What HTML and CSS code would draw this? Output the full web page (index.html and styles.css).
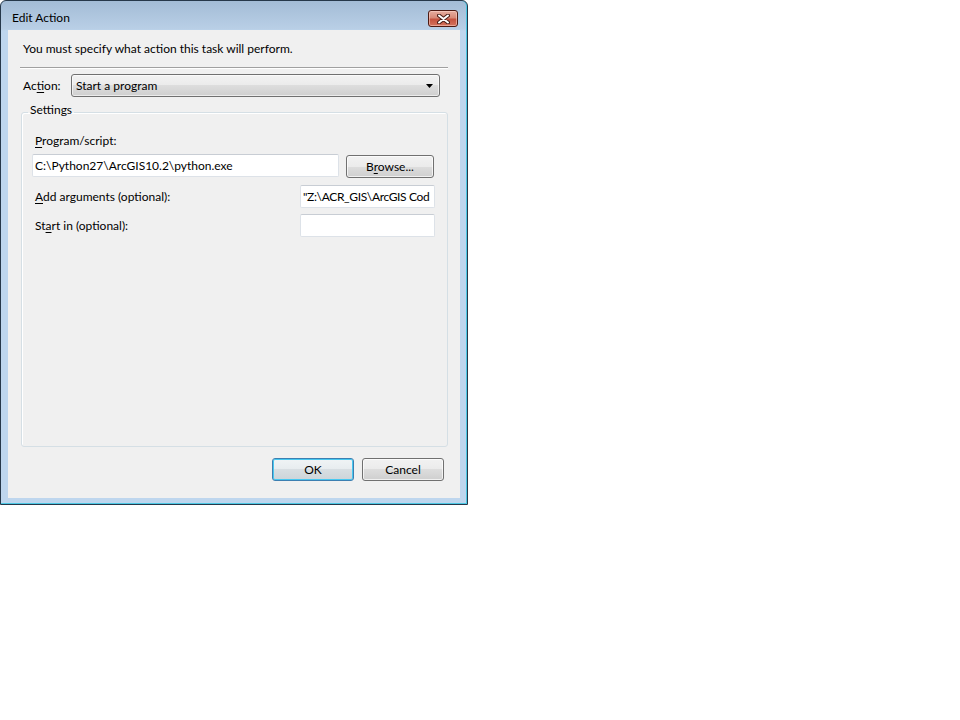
FILE: index.html
```html
<!DOCTYPE html>
<html lang="en">

<head>
    <meta charset="UTF-8">
    <title>Edit Action</title>
    <link rel="stylesheet" href="styles.css">
</head>

<body>
    <div class="window">
        <div class="titlebar">
            <span class="title">Edit Action</span>
            <button class="close-btn" aria-label="Close">
                <svg width="13" height="10" viewBox="0 0 13 10">
                    <path d="M2 1.5 L11 8.5 M11 1.5 L2 8.5" stroke="#4a1f18" stroke-width="4" stroke-linecap="round" />
                    <path d="M2 1.5 L11 8.5 M11 1.5 L2 8.5" stroke="#ffffff" stroke-width="2" stroke-linecap="round" />
                </svg>
            </button>
        </div>

        <div class="client">
            <p class="intro">You must specify what action this task will perform.</p>
            <div class="separator"></div>

            <div class="action-row">
                <label class="action-label">Ac<u>t</u>ion:</label>
                <div class="combo">
                    <span>Start a program</span>
                    <svg class="combo-arrow" width="7" height="4" viewBox="0 0 7 4">
                        <polygon points="0,0 7,0 3.5,4" fill="#000" />
                    </svg>
                </div>
            </div>

            <fieldset class="settings">
                <legend>Settings</legend>

                <label class="field-label"><u>P</u>rogram/script:</label>
                <div class="program-row">
                    <div class="textbox program-box">C:\Python27\ArcGIS10.2\python.exe</div>
                    <button class="btn browse-btn">B<u>r</u>owse...</button>
                </div>

                <div class="field-row args-row">
                    <label class="row-label"><u>A</u>dd arguments (optional):</label>
                    <div class="textbox short-box args-box">"Z:\ACR_GIS\ArcGIS Cod</div>
                </div>

                <div class="field-row start-row">
                    <label class="row-label">St<u>a</u>rt in (optional):</label>
                    <div class="textbox short-box"></div>
                </div>
            </fieldset>

            <div class="button-row">
                <button class="btn default-btn">OK</button>
                <button class="btn">Cancel</button>
            </div>
        </div>
    </div>
</body>

</html>
```

FILE: styles.css
```css
body {
    margin: 0;
    background-color: #fff;
    font-family: Lato, "Noto Sans", sans-serif;
    font-size: 12px;
    color: #000;
}

u {
    text-decoration-thickness: 1px;
    text-underline-offset: 2px;
}

/* Window frame */
.window {
    width: 452px;
    height: 497px;
    border: 1px solid #26384a;
    border-radius: 6px 6px 0 0;
    background: linear-gradient(#a3bcd6 0, #b9cfe6 28px, #bed6ee 30px, #bed6ee 100%);
    box-shadow: inset 0 -1px 0 #4cc8e4, inset -1px 0 0 #4cc8e4;
    display: flex;
    flex-direction: column;
    padding: 0 7px 6px 7px;
}

.titlebar {
    height: 29px;
    display: flex;
    align-items: flex-start;
    justify-content: space-between;
    padding-left: 4px;
    padding-right: 2px;
}

.title {
    line-height: 16px;
    margin-top: 9px;
}

.close-btn {
    width: 30px;
    height: 17px;
    margin-top: 9px;
    padding: 0;
    border: 1px solid #4d1a12;
    border-radius: 3px;
    background: linear-gradient(#e6ad9f 0%, #d88a78 45%, #c5533f 55%, #d4735d 100%);
    box-shadow: inset 0 0 0 1px rgba(255, 220, 210, 0.5);
    display: flex;
    align-items: center;
    justify-content: center;
}

/* Client area */
.client {
    height: 468px;
    background-color: #f0f0f0;
    display: flex;
    flex-direction: column;
    padding: 11px 12px 17px 12px;
    box-sizing: border-box;
}

.intro {
    margin: 0;
    padding-left: 3px;
    line-height: 16px;
}

.separator {
    margin-top: 10px;
    border-top: 1px solid #a0a0a0;
    border-bottom: 1px solid #fff;
}

.action-row {
    display: flex;
    align-items: center;
    margin-top: 5px;
    padding-left: 3px;
}

.action-label {
    width: 48px;
    line-height: 16px;
}

.combo {
    width: 369px;
    height: 23px;
    box-sizing: border-box;
    border: 1px solid #707070;
    border-radius: 3px;
    background: linear-gradient(#f2f2f2 0%, #ebebeb 50%, #dddddd 50%, #cfcfcf 100%);
    box-shadow: inset 0 0 0 1px rgba(255, 255, 255, 0.6);
    display: flex;
    align-items: center;
    justify-content: space-between;
    padding: 0 6px 0 4px;
}

/* Settings group */
.settings {
    flex: 1;
    margin: 6px 0 0 1px;
    padding: 0 12px 0 10px;
    border: 1px solid #d5dfe5;
    border-radius: 3px;
    box-shadow: inset 1px 1px 0 #fff;
    min-width: 0;
}

.settings legend {
    padding: 0 2px 4px 2px;
    margin-left: -4px;
    line-height: 14px;
}

.field-label {
    display: block;
    margin-top: 12px;
    padding-left: 3px;
    line-height: 16px;
}

.program-row {
    display: flex;
    align-items: flex-start;
    gap: 7px;
    margin-top: 5px;
}

.textbox {
    height: 23px;
    box-sizing: border-box;
    background-color: #fff;
    border: 1px solid #dde2e8;
    border-top-color: #c8cdd4;
    border-radius: 2px;
    padding: 0 2px;
    line-height: 21px;
    white-space: nowrap;
    overflow: hidden;
}

.program-box {
    width: 307px;
}

.short-box {
    width: 135px;
}

.args-box {
    letter-spacing: -0.35px;
}

.field-row {
    display: flex;
    align-items: center;
    justify-content: space-between;
}

.row-label {
    padding-left: 3px;
    line-height: 16px;
}

.args-row {
    margin-top: 7px;
}

.start-row {
    margin-top: 6px;
}

/* Buttons */
.btn {
    font-family: inherit;
    font-size: 12px;
    color: #000;
    height: 23px;
    padding: 0;
    border: 1px solid #707070;
    border-radius: 3px;
    background: linear-gradient(#f2f2f2 0%, #ebebeb 50%, #dddddd 50%, #cfcfcf 100%);
    box-shadow: inset 0 0 0 1px rgba(255, 255, 255, 0.7);
}

.browse-btn {
    width: 88px;
    margin-top: 1px;
}

.button-row {
    display: flex;
    justify-content: flex-end;
    gap: 8px;
    margin-top: 11px;
    padding-right: 4px;
}

.button-row .btn {
    width: 82px;
}

.default-btn {
    border-color: #3c7fb1;
    background: linear-gradient(#f0f4f6 0%, #e7ecef 50%, #d8dee2 50%, #cdd4d9 100%);
    box-shadow: inset 0 0 0 1px #48c8f0;
}
```
